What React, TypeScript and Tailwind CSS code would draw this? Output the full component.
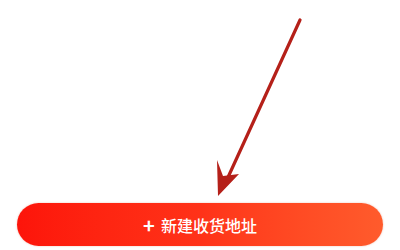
export default function App() {
  return (
    <div
      className="flex h-[250px] w-[400px] flex-col bg-white"
      style={{ fontFamily: '"Noto Sans CJK SC", "Noto Sans", sans-serif' }}
    >
      <svg width="400" height="203" viewBox="0 0 400 203" className="block shrink-0">
        <line x1="300" y1="20" x2="224" y2="186" stroke="#b52019" strokeWidth="3.2" strokeLinecap="round" />
        <path d="M218 196 L217 160 L223 176 L239 174 Z" fill="#b52019" />
      </svg>
      <div className="px-[17px]">
        <button className="flex h-[43px] w-full items-center justify-center gap-[6px] rounded-full bg-gradient-to-r from-[#fd140a] via-[#ff3218] to-[#ff5b2c] text-[16px] text-white shadow-[0_0_2px_rgba(200,60,20,0.35)]">
          <span className="text-[20px] leading-none font-bold">+</span>
          <span className="leading-none font-medium">新建收货地址</span>
        </button>
      </div>
    </div>
  );
}
